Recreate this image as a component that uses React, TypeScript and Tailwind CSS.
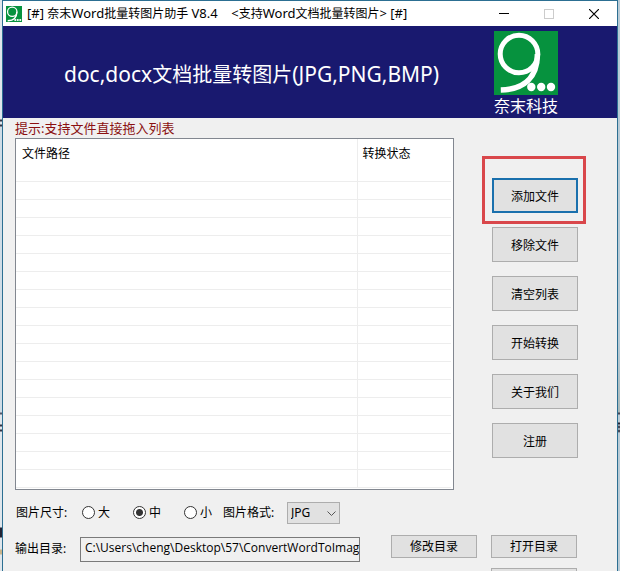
import React, { useState } from 'react';
import clsx from 'clsx';

const ACTIONS = ['添加文件', '移除文件', '清空列表', '开始转换', '关于我们', '注册'];
const SIZES = ['大', '中', '小'];
const EMPTY_ROWS = 17;

const Logo = ({ className }: { className: string }) => (
  <svg viewBox="0 0 64 64" className={className} aria-hidden="true">
    <rect width="64" height="64" fill="#06923e" />
    <circle cx="25" cy="23" r="18.8" fill="none" stroke="#fff" strokeWidth="5" />
    <path d="M43.4 23C43.4 47 30 58.500 6.800 59" fill="none" stroke="#fff" strokeWidth="5.500" />
    <circle cx="37.300" cy="56" r="4.200" fill="#fff" />
    <circle cx="47.200" cy="56" r="4.200" fill="#fff" />
    <circle cx="57" cy="56" r="4.200" fill="#fff" />
  </svg>
);

const TitleBar = () => (
  <header className="flex h-[25px] shrink-0 items-center bg-white">
    <Logo className="ml-[3px] size-4" />
    {/* Latin runs are set one size larger than the Chinese ones */}
    <h1 className="ml-[5px] flex-1 whitespace-pre text-[13px]">
      [#] <span className="text-xs">奈末</span>Word<span className="text-xs">批量转图片助手</span> V8.4    &lt;
      <span className="text-xs">支持</span>Word<span className="text-xs">文档批量转图片</span>&gt; [#]
    </h1>
    <button aria-label="Minimize" className="flex h-full w-[45px] items-center justify-center">
      <svg width="10" height="10" stroke="#000"><path d="M0 4.500H10" /></svg>
    </button>
    <button aria-label="Maximize" disabled className="flex h-full w-[45px] items-center justify-center">
      <svg width="10" height="10" fill="none" stroke="#ccc"><rect x=".5" y=".5" width="9" height="9" /></svg>
    </button>
    <button aria-label="Close" className="flex h-full w-[46px] items-center justify-center">
      <svg width="10" height="10" stroke="#000" strokeWidth="1.200"><path d="M0 0L10 10M10 0L0 10" /></svg>
    </button>
  </header>
);

const Banner = () => (
  <div className="flex h-[92px] shrink-0 items-center bg-[#19196f] text-white">
    <p className="flex-1 pl-[61px] pt-1 text-[21px]">
      doc,docx<span className="text-xl">文档批量转图片</span>(JPG,PNG,BMP)
    </p>
    <div className="mr-[59px] flex flex-col items-center pt-1 text-base leading-[22px]">
      <Logo className="size-16" />
      奈末科技
    </div>
  </div>
);

const FileTable = () => (
  <div className="min-w-0 flex-1 border border-[#828790] bg-white pr-[2px] pb-[1px]">
    <table className="w-full table-fixed border-collapse text-left">
      <thead>
        <tr className="h-[42px] border-b border-[#ededed] align-top">
          <th className="border-r border-[#ededed] pl-[6px] pt-[7px] font-normal">文件路径</th>
          <th className="w-[94px] pl-[5px] pt-[7px] font-normal">转换状态</th>
        </tr>
      </thead>
      <tbody>
        {Array.from({ length: EMPTY_ROWS }, (_, i) => (
          <tr key={i} className="h-[18px] border-b border-[#ededed]">
            <td className="border-r border-[#ededed]" />
            <td />
          </tr>
        ))}
      </tbody>
    </table>
  </div>
);

const PushButton = ({ label, className }: { label: string; className?: string }) => (
  <button className={clsx('w-[86px] shrink-0 border bg-[#e1e1e1] pt-[2px] text-center', className)}>{label}</button>
);

const App = () => {
  const [size, setSize] = useState('中');
  const [format, setFormat] = useState('JPG');
  const [dir, setDir] = useState('C:\\Users\\cheng\\Desktop\\57\\ConvertWordToImag');

  return (
    <div className="flex h-screen overflow-hidden font-['Noto_Sans','Noto_Sans_CJK_SC',sans-serif] text-xs text-black">
      {/* Slivers of the window behind */}
      <div className="w-[2px] shrink-0 bg-[linear-gradient(#dfe6ec_119px,#334_120px_121px,#dfe6ec_122px_124px,#334_125px_126px,#cfdce6_127px_412px,#556_413px_414px,#dfe6ec_415px_424px,#334_425px_426px,#dfe6ec_427px_429px,#334_430px_431px,#dfe6ec_432px_527px,#223_528px_537px,#dfe6ec_538px_549px,#c8b48c_550px_554px,#dfe6ec_555px)]" />
      <div className="flex min-w-0 flex-1 flex-col border border-b-0 border-[#2c6f92] bg-[#f0f0f0]">
        <TitleBar />
        <Banner />
        <main className="pl-3">
          <p className="h-5 text-[13px] leading-5 text-[#8b1010]">提示:支持文件直接拖入列表</p>

          <div className="flex">
            <FileTable />
            {/* Actions */}
            <div className="ml-7 mr-[31px] mt-[18px] flex w-[104px] flex-col items-start">
              <div className="border-3 border-[#d9474b] pl-[7px] pr-[5px] pt-[19px] pb-2">
                <PushButton label={ACTIONS[0]} className="block h-[35px] border-2 border-[#1a70ad]" />
              </div>
              <div className="ml-[10px] mt-[3px] flex flex-col gap-[14px]">
                {ACTIONS.slice(1).map((label) => (
                  <PushButton key={label} label={label} className="h-[35px] border-[#adadad]" />
                ))}
              </div>
            </div>
          </div>

          {/* Image options */}
          <div className="mt-3 flex h-[22px] items-center">
            <span className="w-[67px] pl-px pt-px">图片尺寸:</span>
            {SIZES.map((item) => (
              <label key={item} className="flex w-[51px] items-center gap-[3px]">
                <input
                  type="radio"
                  name="size"
                  checked={size === item}
                  onChange={() => setSize(item)}
                  className="size-[13px] appearance-none rounded-full border border-[#333] bg-white checked:bg-[radial-gradient(#333_3px,white_4px)]"
                />
                <span className="pt-px">{item}</span>
              </label>
            ))}
            <label htmlFor="format" className="-ml-3 w-16 pt-px">图片格式:</label>
            <div className="relative">
              <select
                id="format"
                value={format}
                onChange={(e) => setFormat(e.target.value)}
                className="h-[22px] w-[53px] appearance-none border border-[#adadad] bg-[#e1e1e1] pl-[3px]"
              >
                <option>JPG</option>
                <option>PNG</option>
                <option>BMP</option>
              </select>
              <svg width="9" height="6" fill="none" stroke="#555" className="pointer-events-none absolute right-1 top-[9px]">
                <path d="M.5 .5L4.500 4.500L8.500 .5" />
              </svg>
            </div>
          </div>

          {/* Output directory */}
          <div className="mt-[11px] flex items-start">
            <label htmlFor="dir" className="w-[65px] pt-[6px]">输出目录:</label>
            <input
              id="dir"
              value={dir}
              onChange={(e) => setDir(e.target.value)}
              className="mt-[2px] h-[25px] min-w-0 flex-1 border border-[#7a7a7a] bg-[#f0f0f0] pb-[3px] pl-1 font-['Open_Sans',sans-serif]"
            />
            <div className="ml-[31px] mr-10 grid grid-cols-2 gap-x-[14px] gap-y-[10px]">
              <PushButton label="修改目录" className="h-[23px] border-[#adadad]" />
              <PushButton label="打开目录" className="h-[23px] border-[#adadad]" />
              <PushButton label="" className="col-start-2 h-[23px] border-[#adadad]" />
            </div>
          </div>
        </main>
      </div>
      <div className="w-[2px] shrink-0 bg-[linear-gradient(#b9cbd6_340px,#a9b9ba_412px,#445_413px_414px,#b9cbd6_415px_422px,#223_423px_424px,#b9cbd6_425px,#223_427px,#b9cbd6_429px,#223_431px,#b9cbd6_433px)]" />
    </div>
  );
};

export default App;
